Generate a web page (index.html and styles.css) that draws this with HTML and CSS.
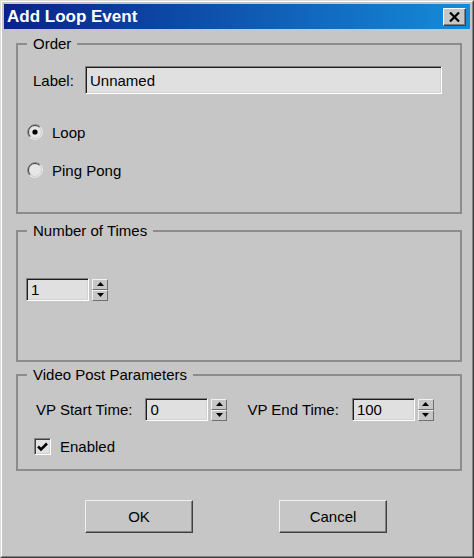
FILE: index.html
```html
<!DOCTYPE html>
<html>
<head>
<meta charset="utf-8">
<link rel="stylesheet" href="styles.css">
</head>
<body>
<div class="window">
  <div class="frame">
    <div class="titlebar">
      <span class="title">Add Loop Event</span>
      <span class="close">
        <svg width="11" height="10" viewBox="0 0 11 10"><path d="M1 0.5 L10 9.5 M10 0.5 L1 9.5" stroke="#000" stroke-width="2.2" fill="none"/></svg>
      </span>
    </div>
    <div class="client">
      <fieldset class="group g-order">
        <legend>Order</legend>
        <div class="label-row">
          <span class="lbl">Label:</span>
          <div class="textfield">Unnamed</div>
        </div>
        <div class="radio-row r-loop">
          <span class="radio">
            <svg width="16" height="16" viewBox="0 0 16 16">
              <circle cx="8" cy="8" r="6.5" fill="#e6e6e6"/>
              <path d="M13.3 2.7 A7.5 7.5 0 0 0 2.7 13.3" stroke="#808080" fill="none"/>
              <path d="M2.7 13.3 A7.5 7.5 0 0 0 13.3 2.7" stroke="#f4f4f4" fill="none"/>
              <path d="M12.6 3.4 A6.5 6.5 0 0 0 3.4 12.6" stroke="#404040" fill="none"/>
              <path d="M3.4 12.6 A6.5 6.5 0 0 0 12.6 3.4" stroke="#d0d0d0" fill="none"/>
              <circle cx="8" cy="8" r="2.6" fill="#000"/>
            </svg>
          </span>
          <span>Loop</span>
        </div>
        <div class="radio-row r-ping">
          <span class="radio">
            <svg width="16" height="16" viewBox="0 0 16 16">
              <circle cx="8" cy="8" r="6.5" fill="#e6e6e6"/>
              <path d="M13.3 2.7 A7.5 7.5 0 0 0 2.7 13.3" stroke="#808080" fill="none"/>
              <path d="M2.7 13.3 A7.5 7.5 0 0 0 13.3 2.7" stroke="#f4f4f4" fill="none"/>
              <path d="M12.6 3.4 A6.5 6.5 0 0 0 3.4 12.6" stroke="#404040" fill="none"/>
              <path d="M3.4 12.6 A6.5 6.5 0 0 0 12.6 3.4" stroke="#d0d0d0" fill="none"/>
            </svg>
          </span>
          <span>Ping Pong</span>
        </div>
      </fieldset>

      <fieldset class="group g-times">
        <legend>Number of Times</legend>
        <div class="spinner s-times">
          <div class="spin-field">1</div>
          <div class="spin-btns">
            <span class="sb"><svg width="7" height="4" viewBox="0 0 7 4"><path d="M3.5 0 L7 4 L0 4 Z" fill="#000"/></svg></span>
            <span class="sb"><svg width="7" height="4" viewBox="0 0 7 4"><path d="M0 0 L7 0 L3.5 4 Z" fill="#000"/></svg></span>
          </div>
        </div>
      </fieldset>

      <fieldset class="group g-vp">
        <legend>Video Post Parameters</legend>
        <div class="vp-row">
          <span class="vp-lbl">VP Start Time:</span>
          <div class="spinner">
            <div class="spin-field">0</div>
            <div class="spin-btns">
              <span class="sb"><svg width="7" height="4" viewBox="0 0 7 4"><path d="M3.5 0 L7 4 L0 4 Z" fill="#000"/></svg></span>
              <span class="sb"><svg width="7" height="4" viewBox="0 0 7 4"><path d="M0 0 L7 0 L3.5 4 Z" fill="#000"/></svg></span>
            </div>
          </div>
          <span class="vp-lbl vp-end">VP End Time:</span>
          <div class="spinner">
            <div class="spin-field">100</div>
            <div class="spin-btns">
              <span class="sb"><svg width="7" height="4" viewBox="0 0 7 4"><path d="M3.5 0 L7 4 L0 4 Z" fill="#000"/></svg></span>
              <span class="sb"><svg width="7" height="4" viewBox="0 0 7 4"><path d="M0 0 L7 0 L3.5 4 Z" fill="#000"/></svg></span>
            </div>
          </div>
        </div>
        <div class="check-row">
          <span class="checkbox">
            <svg width="11" height="10" viewBox="0 0 11 10"><path d="M1 4.5 L4 7.5 L10 1.5" stroke="#000" stroke-width="2.6" fill="none"/></svg>
          </span>
          <span>Enabled</span>
        </div>
      </fieldset>

      <div class="buttons">
        <button class="btn">OK</button>
        <button class="btn">Cancel</button>
      </div>
    </div>
  </div>
</div>
</body>
</html>
```

FILE: styles.css
```css
* { box-sizing: border-box; }

body {
  margin: 0;
  background: #c6c6c6;
  font-family: "Liberation Sans", Arial, sans-serif;
  font-size: 15px;
  color: #000;
}

.window {
  width: 474px;
  height: 558px;
  border: 1px solid;
  border-color: #dcdcdc #404040 #404040 #dcdcdc;
  background: #c6c6c6;
}

.frame {
  height: 100%;
  border: 1px solid;
  border-color: #ffffff #808080 #808080 #ffffff;
  padding: 2px;
  display: flex;
  flex-direction: column;
}

.titlebar {
  height: 25px;
  flex: none;
  display: flex;
  align-items: center;
  justify-content: space-between;
  padding: 0 4px 0 3px;
  background: linear-gradient(to right, #08228a, #168cd8);
  color: #fff;
}

.title {
  font-weight: bold;
  font-size: 17px;
  line-height: 20px;
}

.close {
  width: 23px;
  height: 18px;
  display: flex;
  align-items: center;
  justify-content: center;
  background: #c6c6c6;
  border: 1px solid;
  border-color: #ffffff #404040 #404040 #ffffff;
  box-shadow: inset -1px -1px #808080;
}

.client {
  padding: 6px 8px 0 12px;
}

.group {
  margin: 0;
  padding: 0;
  border: 2px solid #8c8c8c;
  min-width: 0;
}

.group legend {
  margin-left: 9px;
  padding: 0 6px;
  line-height: 18px;
}

.g-order { height: 179px; }
.g-times { height: 140px; margin-top: 8px; }
.g-vp { height: 105px; margin-top: 4px; }

.label-row {
  display: flex;
  align-items: center;
  margin: 13px 0 0 15px;
}

.lbl { width: 52px; }

.textfield,
.spin-field {
  background: #e0e0e0;
  border: 1px solid;
  border-color: #808080 #ffffff #ffffff #808080;
  box-shadow: inset 1px 1px #1e1e1e, inset -1px -1px #d2d2d2;
  display: flex;
  align-items: center;
}

.textfield {
  width: 357px;
  height: 28px;
  padding-left: 4px;
}

.radio-row {
  display: flex;
  align-items: center;
  height: 20px;
  margin-left: 9px;
  gap: 9px;
}

.r-loop { margin-top: 28px; }
.r-ping { margin-top: 18px; }

.radio {
  width: 16px;
  height: 16px;
  display: flex;
}

.spinner {
  display: flex;
  align-items: center;
  gap: 3px;
}

.s-times { margin: 38px 0 0 8px; }

.spin-field {
  width: 63px;
  height: 23px;
  padding-left: 4px;
}

.spin-btns {
  width: 16px;
  height: 22px;
  display: flex;
  flex-direction: column;
}

.sb {
  flex: 1;
  display: flex;
  align-items: center;
  justify-content: center;
  background: #c6c6c6;
  border: 1px solid;
  border-color: #f2f2f2 #707070 #707070 #f2f2f2;
}

.vp-row {
  display: flex;
  align-items: center;
  margin: 14px 0 0 18px;
}

.vp-lbl { margin-right: 13px; }
.vp-end { margin-left: 20px; }

.check-row {
  display: flex;
  align-items: center;
  gap: 9px;
  margin: 17px 0 0 16px;
}

.checkbox {
  width: 17px;
  height: 17px;
  display: flex;
  align-items: center;
  justify-content: center;
  background: #e2e2e2;
  border: 1px solid;
  border-color: #808080 #ffffff #ffffff #808080;
  box-shadow: inset 1px 1px #404040, inset -1px -1px #d0d0d0;
}

.buttons {
  display: flex;
  gap: 86px;
  margin: 29px 0 0 69px;
}

.btn {
  width: 108px;
  height: 33px;
  font: inherit;
  color: #000;
  background: #c6c6c6;
  border: 1px solid;
  border-color: #f0f0f0 #404040 #404040 #f0f0f0;
  box-shadow: inset -1px -1px #808080;
  padding: 0;
}
```
